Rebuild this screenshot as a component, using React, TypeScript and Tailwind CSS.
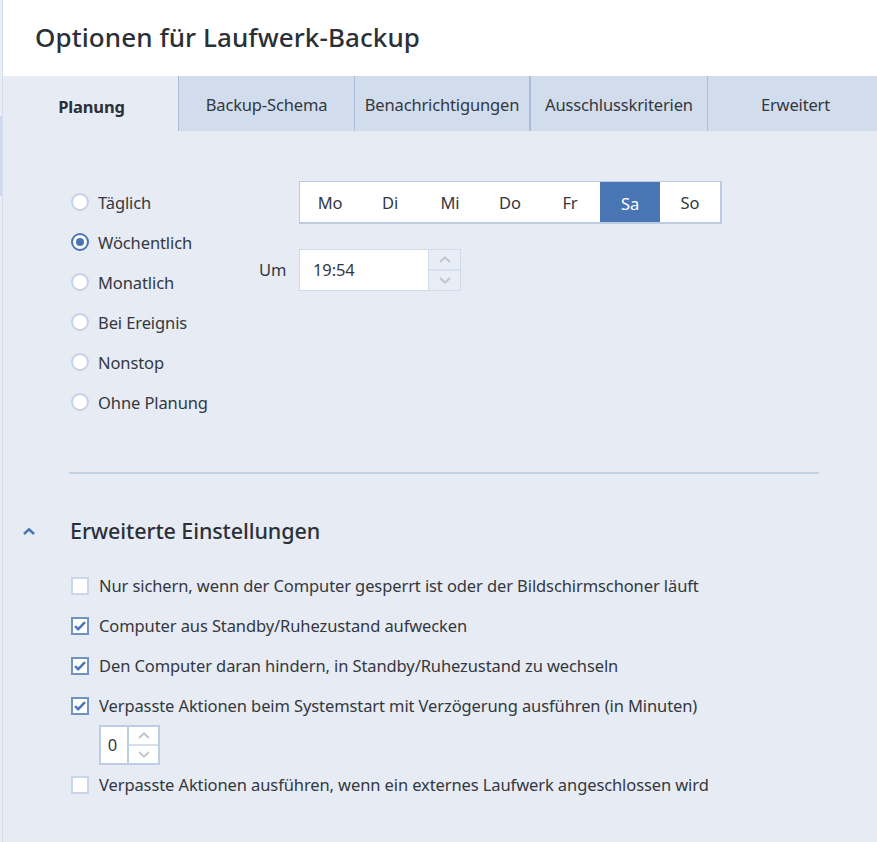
const tabs = [
  { label: "Planung", w: "w-[176px]" },
  { label: "Backup-Schema", w: "w-[176px]" },
  { label: "Benachrichtigungen", w: "w-[176px]" },
  { label: "Ausschlusskriterien", w: "w-[177px]" },
  { label: "Erweitert", w: "flex-1" },
];
const days = ["Mo", "Di", "Mi", "Do", "Fr", "Sa", "So"];
const radios = ["Täglich", "Wöchentlich", "Monatlich", "Bei Ereignis", "Nonstop", "Ohne Planung"];

// chevron drawn by hand, lucide's is too thin at this size
function Chev({ up, className, sw = 2 }: { up?: boolean; className: string; sw?: number }) {
  return (
    <svg width={12} height={7} viewBox="0 0 12 7" fill="none" className={className}>
      <path d={up ? "M1 6 L6 1.4 L11 6" : "M1 1 L6 5.6 L11 1"} stroke="currentColor" strokeWidth={sw} />
    </svg>
  );
}

function Radio({ label, checked }: { label: string; checked?: boolean }) {
  return (
    <div className="flex h-10 items-center">
      <span
        className={
          "flex h-[18px] w-[18px] items-center justify-center rounded-full border-2 bg-white " +
          (checked ? "border-[#4a75b4]" : "border-[#c4d1e6]")
        }
      >
        {checked && <span className="h-2 w-2 rounded-full bg-[#4a75b4]" />}
      </span>
      <span className="ml-[9px] pt-[2px]">{label}</span>
    </div>
  );
}

function Check({ label, checked }: { label: string; checked?: boolean }) {
  return (
    <div className="flex h-10 items-center">
      <span
        className={
          "flex h-[18px] w-[18px] items-center justify-center border-2 bg-white " +
          (checked ? "border-[#7093c4]" : "border-[#c9d6e9]")
        }
      >
        {checked && (
          <svg width="12" height="10" viewBox="0 0 12 10" fill="none">
            <path d="M1 5.2 L4.2 8.2 L11 1.2" stroke="#4a75b4" strokeWidth="2.4" />
          </svg>
        )}
      </span>
      <span className="ml-[10px]">{label}</span>
    </div>
  );
}

export default function App() {
  return (
    <div className="flex h-[842px] w-[877px] overflow-hidden bg-[#e7ebf4] font-['Noto_Sans',sans-serif] text-[16.5px] tracking-[-0.1px] text-[#33383f]">
      <div className="w-[2px] shrink-0 bg-[#e8edf6] pt-[116px]">
        <div className="h-20 w-[2px] bg-[#cfd9ea]" />
      </div>
      <div className="flex min-w-0 flex-1 flex-col border-l border-[#d3deee]">
        <div className="flex h-[76px] items-center bg-white pb-px pl-[32px]">
          <h1 className="pb-px text-[26px] font-medium tracking-[0.08px] text-[#2b3038]">Optionen für Laufwerk-Backup</h1>
        </div>

        <div className="flex h-[55px] bg-[#d1dcec] tracking-[-0.15px]">
          {tabs.map((t, i) => (
            <div
              key={t.label}
              className={
                "flex items-center justify-center border-r border-[#a9bdd6] " +
                t.w +
                (i === 0 ? " bg-[#e7ebf4] pl-[2px] pt-[7px] font-bold text-[#2b3038]" : " pt-[3px]") +
                (i === 2 ? " border-r-2" : "") +
                (i === 4 ? " border-r-0 pl-[6px]" : "")
              }
            >
              {t.label}
            </div>
          ))}
        </div>

        <div className="flex pl-[68px] pt-[50px]">
          <div className="w-[188px] pt-px">
            {radios.map((r) => (
              <Radio key={r} label={r} checked={r === "Wöchentlich"} />
            ))}
          </div>
          <div>
            <div className="ml-10 flex h-[43px] w-[423px] border border-r-2 border-b-2 border-[#bccbe0] bg-white">
              {days.map((d) => (
                <div
                  key={d}
                  className={
                    "flex h-full w-[60px] items-center justify-center " +
                    (d === "Sa" ? "bg-[#4a75b4] pt-[4px] text-white" : "pt-[2px]")
                  }
                >
                  {d}
                </div>
              ))}
            </div>
            <div className="mt-[25px] flex items-center">
              <span className="w-10">Um</span>
              <div className="flex h-[42px] w-[162px] border border-[#cfdaea] bg-white">
                <div className="flex flex-1 items-center pl-[13px]">19:54</div>
                <div className="flex w-[32px] flex-col border-l border-[#cfdaea] bg-[#e9edf5]">
                  <div className="flex flex-1 items-center justify-center border-b-2 border-[#d5dfee]">
                    <Chev up className="text-[#c2c6cd]" />
                  </div>
                  <div className="flex flex-1 items-center justify-center">
                    <Chev className="text-[#c2c6cd]" />
                  </div>
                </div>
              </div>
            </div>
          </div>
        </div>

        <div className="ml-[66px] mt-[50px] h-[2px] w-[750px] bg-[#c4d1e3]" />

        <div className="mt-[39px] flex h-[36px] items-center">
          <Chev up sw={2.6} className="ml-[20px] text-[#4a75b4]" />
          <h2 className="ml-[35px] text-[21.5px] font-medium tracking-[-0.1px] text-[#2b3038]">Erweiterte Einstellungen</h2>
        </div>

        <div className="mt-[17px] pl-[68px]">
          <Check label="Nur sichern, wenn der Computer gesperrt ist oder der Bildschirmschoner läuft" />
          <Check checked label="Computer aus Standby/Ruhezustand aufwecken" />
          <Check checked label="Den Computer daran hindern, in Standby/Ruhezustand zu wechseln" />
          <Check checked label="Verpasste Aktionen beim Systemstart mit Verzögerung ausführen (in Minuten)" />
          <div className="ml-[28px] flex h-10 w-[61px] border-2 border-[#bccde4] bg-white -mt-[1px]">
            <div className="flex w-[28px] items-center justify-center border-r-2 border-[#bccde4] pr-[3px]">0</div>
            <div className="flex flex-1 flex-col">
              <div className="flex flex-1 items-center justify-center border-b-2 border-[#d5dfee]">
                <Chev up className="text-[#c2c6cd]" />
              </div>
              <div className="flex flex-1 items-center justify-center">
                <Chev className="text-[#c2c6cd]" />
              </div>
            </div>
          </div>
          <Check label="Verpasste Aktionen ausführen, wenn ein externes Laufwerk angeschlossen wird" />
        </div>
      </div>
    </div>
  );
}
